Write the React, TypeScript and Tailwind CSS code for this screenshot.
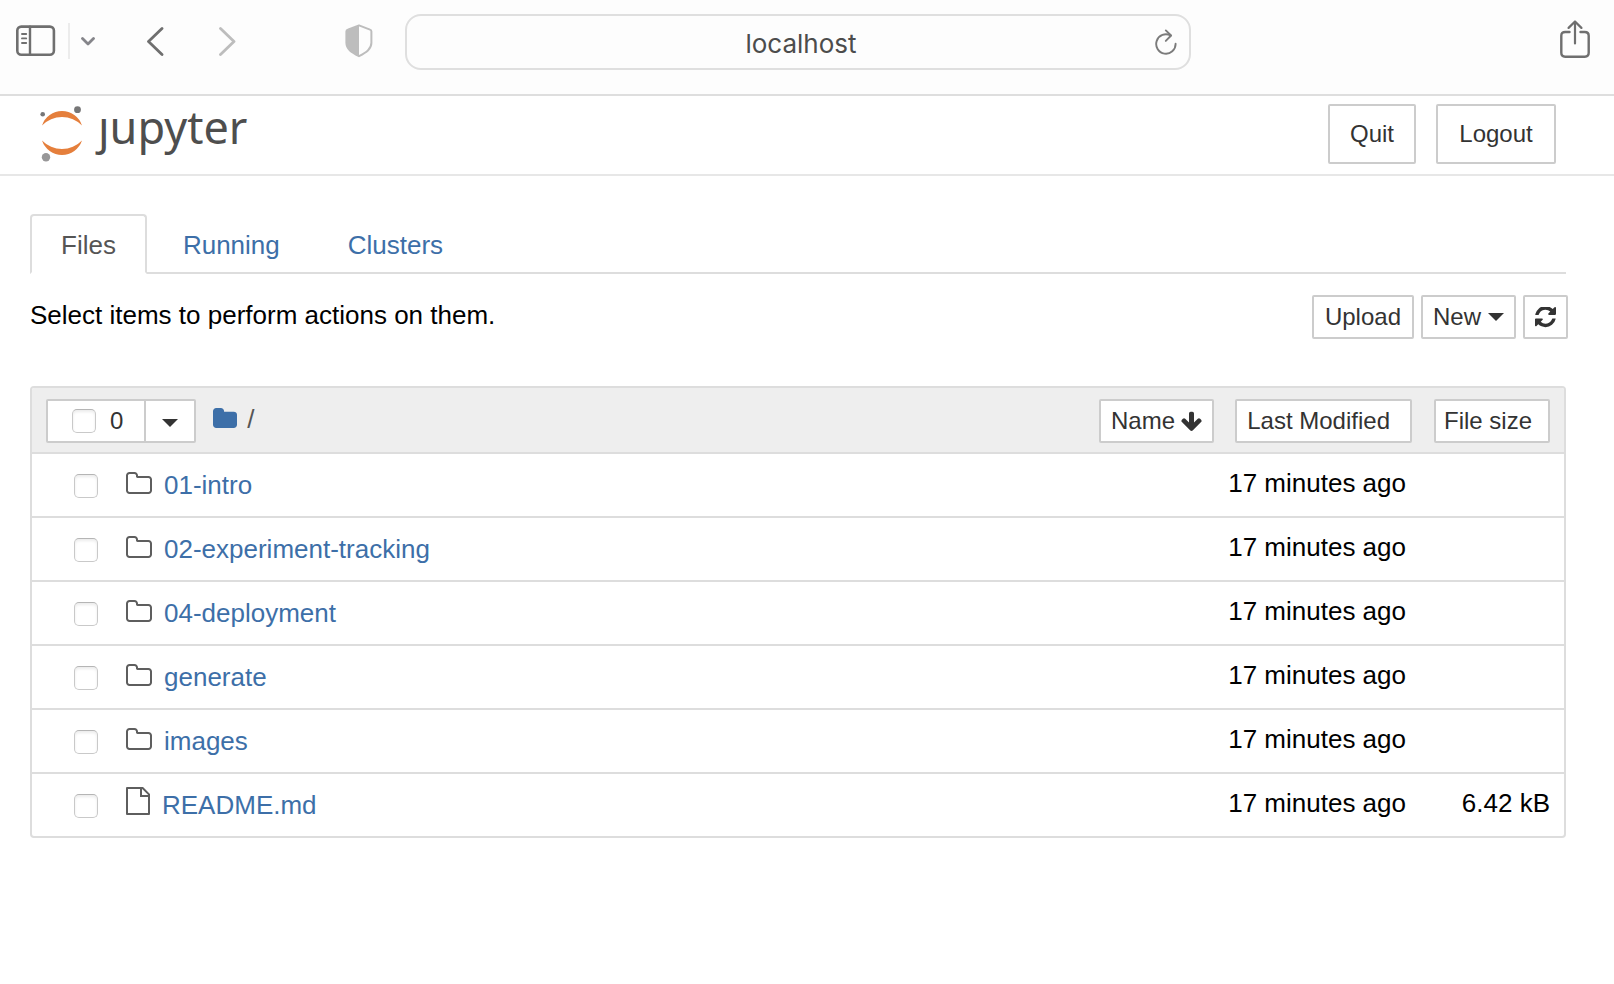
import type { ReactNode } from "react";

type Entry = { name: string; kind: "folder" | "file"; modified: string; size?: string };

const entries: Entry[] = [
  { name: "01-intro", kind: "folder", modified: "17 minutes ago" },
  { name: "02-experiment-tracking", kind: "folder", modified: "17 minutes ago" },
  { name: "04-deployment", kind: "folder", modified: "17 minutes ago" },
  { name: "generate", kind: "folder", modified: "17 minutes ago" },
  { name: "images", kind: "folder", modified: "17 minutes ago" },
  { name: "README.md", kind: "file", modified: "17 minutes ago", size: "6.42 kB" },
];

function SidebarIcon() {
  return (
    <svg width="40" height="32" viewBox="0 0 40 32" fill="none" stroke="#6f6f6f" strokeLinecap="round">
      <rect x="1.3" y="1.6" width="36.6" height="28.2" rx="4" strokeWidth="2.6" />
      <path d="M14 1.6v28.2" strokeWidth="2.4" />
      <path d="M6 9h4.2M6 13.4h4.2M6 18h4.2" strokeWidth="1.9" />
    </svg>
  );
}

function ShieldIcon() {
  return (
    <svg width="28" height="34" viewBox="0 0 28 34">
      <path d="M14 1.4 2.8 5.6c-.9.3-1.4.9-1.4 1.9v11.3c0 6.5 5.3 9.5 12.6 13.4 7.2-3.9 12.4-6.9 12.4-13.4V7.5c0-1-.5-1.6-1.4-1.9z" fill="none" stroke="#bdbdbd" strokeWidth="2" strokeLinejoin="round" />
      <path d="M14 1.4 2.8 5.6c-.9.3-1.4.9-1.4 1.9v11.3c0 6.5 5.3 9.5 12.6 13.4z" fill="#bdbdbd" />
    </svg>
  );
}

function ReloadIcon() {
  return (
    <svg width="22" height="27" viewBox="0 0 22 27" fill="none" stroke="#7b7b7b" strokeWidth="1.9" strokeLinecap="round" strokeLinejoin="round">
      <path d="M20.6 14.8A9.7 9.7 0 1 1 15.6 6.5" />
      <path d="M10.8 1.4l5.3 5.1-5.3 5.4" />
    </svg>
  );
}

function ShareIcon() {
  return (
    <svg width="30" height="38" viewBox="0 0 30 38" fill="none" stroke="#6f6f6f" strokeLinecap="round" strokeLinejoin="round">
      <path d="M9.5 12H5.2C2.6 12 1.3 13.3 1.3 15.8v17c0 2.6 1.3 3.9 3.9 3.9h19.6c2.6 0 3.9-1.3 3.9-3.9v-17c0-2.5-1.3-3.8-3.9-3.8H20.5" strokeWidth="2.4" />
      <path d="M15 23.5V1.7M8.6 7.9 15 1.5l6.4 6.4" strokeWidth="2.2" />
    </svg>
  );
}

function JupyterMark() {
  return (
    <svg width="42" height="56" viewBox="0 0 42 56">
      <path d="M2 19.5A21.1 21.1 0 0 1 42 19.500A28 28 0 0 0 2 19.500z" fill="#e57f3c" />
      <path d="M2 34.500A21.100 21.100 0 0 0 42 34.500A28 28 0 0 1 2 34.500z" fill="#e57f3c" />
      <circle cx="2.700" cy="8.200" r="2.300" fill="#767677" />
      <circle cx="37.500" cy="3.700" r="3.400" fill="#767677" />
      <circle cx="6" cy="51.200" r="4.200" fill="#989798" />
    </svg>
  );
}

function RefreshIcon() {
  return (
    <svg width="21" height="21" viewBox="0 64 1536 1536" fill="#333">
      <path d="M1511 928q0 5-1 7-64 268-268 434.5t-478 166.5q-146 0-282.5-55t-243.5-157l-129 129q-19 19-45 19t-45-19-19-45v-448q0-26 19-45t45-19h448q26 0 45 19t19 45-19 45l-137 137q71 66 161 102t187 36q134 0 250-65t186-179q11-17 53-117 8-23 30-23h192q13 0 22.5 9.5t9.5 22.5zm25-800v448q0 26-19 45t-45 19h-448q-26 0-45-19t-19-45 19-45l138-138q-148-137-349-137-134 0-250 65t-186 179q-11 17-53 117-8 23-30 23h-199q-13 0-22.5-9.5t-9.5-22.5v-7q65-268 270-434.5t480-166.5q146 0 284 55.5t245 156.5l130-129q19-19 45-19t45 19 19 45z" />
    </svg>
  );
}

function ArrowDownIcon() {
  return (
    <svg width="21" height="20" viewBox="53 64 1558 1547" fill="#333">
      <path d="M1611 832q0 53-37 90l-651 652q-39 37-91 37-53 0-90-37l-651-652q-38-36-38-90 0-53 38-91l74-75q39-37 91-37 53 0 90 37l294 294v-704q0-52 38-90t90-38h128q52 0 90 38t38 90v704l294-294q37-37 90-37 52 0 91 37l75 75q37 39 37 91z" />
    </svg>
  );
}

function FolderIcon() {
  return (
    <svg width="24" height="20" viewBox="0 128 1664 1408" preserveAspectRatio="none" fill="#3d6fa8">
      <path d="M1664 608v704q0 92-66 158t-158 66h-1216q-92 0-158-66t-66-158v-960q0-92 66-158t158-66h320q92 0 158 66t66 158v32h672q92 0 158 66t66 158z" />
    </svg>
  );
}

function FolderOutlineIcon() {
  return (
    <svg width="26" height="22" viewBox="0 128 1664 1408" fill="#5e5e5e">
      <path d="M1536 1312v-704q0-40-28-68t-68-28h-704q-40 0-68-28t-28-68v-64q0-40-28-68t-68-28h-320q-40 0-68 28t-28 68v960q0 40 28 68t68 28h1216q40 0 68-28t28-68zm128-704v704q0 92-66 158t-158 66h-1216q-92 0-158-66t-66-158v-960q0-92 66-158t158-66h320q92 0 158 66t66 158v32h672q92 0 158 66t66 158z" />
    </svg>
  );
}

function FileOutlineIcon() {
  return (
    <svg width="24" height="28" viewBox="0 0 24 28" fill="none" stroke="#5e5e5e" strokeWidth="2">
      <path d="M1 1h15.6L23 7.4V27H1z" strokeLinejoin="round" />
      <path d="M15 1v8h8" />
    </svg>
  );
}

function Caret() {
  return (
    <svg width="16" height="8" viewBox="0 0 16 8" fill="#333">
      <path d="M0 0h16L8 8z" />
    </svg>
  );
}

function Checkbox({ id, label }: { id: string; label: string }) {
  return (
    <input
      id={id}
      type="checkbox"
      aria-label={label}
      className="size-6 shrink-0 appearance-none rounded-[5px] border border-[#c9c9c9] border-t-[#b5b5b5] bg-white shadow-[inset_0_2px_3px_rgba(0,0,0,0.08)] checked:bg-[#3d6fa8]"
    />
  );
}

function Button({ children, className, label }: { children: ReactNode; className: string; label?: string }) {
  return (
    <button
      type="button"
      aria-label={label}
      className={
        "flex items-center justify-center whitespace-nowrap rounded-[2px] border-2 border-[#ccc] bg-white text-2xl leading-8 font-normal text-[#333] " +
        className
      }
    >
      {children}
    </button>
  );
}

function BrowserBar() {
  return (
    <div className="grid h-24 grid-cols-[405px_1fr_423px] items-start border-b-2 border-[#dedede] bg-[#fdfdfd] pt-3.5">
      <div className="flex h-14 items-center pb-0.5 pl-4">
        <button type="button" aria-label="Show sidebar">
          <SidebarIcon />
        </button>
        <div className="ml-3 h-9 w-0.5 bg-[#ececec]" />
        <button type="button" aria-label="Tab groups" className="ml-[11px]">
          <svg width="14" height="9" viewBox="0 0 14 9" fill="none" stroke="#85858a" strokeWidth="2.8" strokeLinecap="round" strokeLinejoin="round">
            <path d="M1.5 1.5 7 7l5.5-5.5" />
          </svg>
        </button>
        <button type="button" aria-label="Back" className="ml-[52px]">
          <svg width="17" height="29" viewBox="0 0 17 29" fill="none" stroke="#6f6f6f" strokeWidth="2.8" strokeLinecap="round" strokeLinejoin="round">
            <path d="M15 1.5 1.5 14.5 15 27.5" />
          </svg>
        </button>
        <button type="button" aria-label="Forward" className="ml-[55px]">
          <svg width="17" height="29" viewBox="0 0 17 29" fill="none" stroke="#bdbdbd" strokeWidth="2.8" strokeLinecap="round" strokeLinejoin="round">
            <path d="M1.5 1.5 15 14.5 1.5 27.5" />
          </svg>
        </button>
        <button type="button" aria-label="Privacy report" className="ml-[109px]">
          <ShieldIcon />
        </button>
      </div>
      <div className="flex h-14 items-center rounded-2xl border-2 border-[#dfdfdf] pr-3 pl-10">
        <input
          type="text"
          aria-label="Address"
          defaultValue="localhost"
          className="min-w-0 flex-1 bg-transparent pt-1 text-center font-['Inter',sans-serif] text-[26px] leading-8 text-[#4c4c4c] outline-none"
        />
        <button type="button" aria-label="Reload page">
          <ReloadIcon />
        </button>
      </div>
      <div className="flex h-14 items-center justify-end pr-6 pb-1.5">
        <button type="button" aria-label="Share">
          <ShareIcon />
        </button>
      </div>
    </div>
  );
}

function Header() {
  return (
    <header className="flex h-20 items-start justify-between border-b-2 border-[#e7e7e7] pt-2 pr-[58px] pl-10">
      <a href="#home" aria-label="jupyter" className="flex items-start gap-4 pt-0.5">
        <JupyterMark />
        <span className="font-['Noto_Sans',sans-serif] text-[45px] leading-[42px] text-[#4e4e4e]">ȷupyter</span>
      </a>
      <div className="flex gap-5">
        <Button className="h-15 px-5">Quit</Button>
        <Button className="h-15 min-w-[120px] px-5">Logout</Button>
      </div>
    </header>
  );
}

function Tabs() {
  return (
    <nav className="flex h-15 gap-1 border-b-2 border-[#ddd] text-[26px] leading-9">
      <a href="#files" aria-current="page" className="h-15 rounded-t-[4px] border-2 border-[#ddd] border-b-white bg-white px-[29px] pt-[11px] text-[#555]">
        Files
      </a>
      <a href="#running" className="px-8 pt-[13px] text-[#3d6fa8]">
        Running
      </a>
      <a href="#clusters" className="px-8 pt-[13px] text-[#3d6fa8]">
        Clusters
      </a>
    </nav>
  );
}

function FileTable() {
  return (
    <div className="mt-[47px] overflow-hidden rounded-[4px] border-2 border-[#ddd]">
      <table className="w-full table-fixed border-separate border-spacing-0">
        <colgroup>
          <col />
          <col className="w-[198px]" />
          <col className="w-[142px]" />
        </colgroup>
        <thead className="bg-[#eee]">
          <tr className="h-16">
            <th className="p-0 pt-0.5 pr-2.5 pl-3.5 font-normal">
              <div className="flex items-center">
                <div className="flex h-11 rounded-[2px] border-2 border-[#ccc] bg-white">
                  <label htmlFor="select-all" className="flex items-center gap-3.5 pr-[21px] pl-6 text-2xl leading-8 text-[#333]">
                    <Checkbox id="select-all" label="Select all" />
                    0
                  </label>
                  <button type="button" aria-label="Select by type" className="flex w-[50px] items-center justify-center border-l-2 border-[#ccc] pt-1">
                    <Caret />
                  </button>
                </div>
                <a href="#root" aria-label="Root folder" className="ml-[17px] pb-1.5">
                  <FolderIcon />
                </a>
                <span className="ml-2.5 pb-1 text-[26px] leading-8 text-[#555]">/</span>
                <Button className="ml-auto h-11 gap-1.5 px-2.5">
                  Name <ArrowDownIcon />
                </Button>
              </div>
            </th>
            <th className="p-0 pt-0.5 pr-2.5">
              <Button className="ml-auto h-11 pr-5 pl-2.5">Last Modified</Button>
            </th>
            <th className="p-0 pt-0.5 pr-3.5">
              <Button className="ml-auto h-11 pr-4 pl-2">File size</Button>
            </th>
          </tr>
        </thead>
        <tbody className="text-[26px] leading-9 text-black">
          {entries.map((entry) => (
            <tr key={entry.name} className="h-16">
              <td className="border-t-2 border-[#ddd] p-0 pl-[42px]">
                <div className="flex items-center">
                  <div className="flex pt-0.5">
                    <Checkbox id={"select-" + entry.name} label={"Select " + entry.name} />
                  </div>
                  <div className={entry.kind === "folder" ? "ml-7 pb-1" : "ml-7 pb-2"}>
                    {entry.kind === "folder" ? <FolderOutlineIcon /> : <FileOutlineIcon />}
                  </div>
                  <a href={"#" + entry.name} className="ml-3 text-[#3d6fa8]">
                    {entry.name}
                  </a>
                </div>
              </td>
              <td className="border-t-2 border-[#ddd] p-0 pr-4 pb-1 text-right">{entry.modified}</td>
              <td className="border-t-2 border-[#ddd] p-0 pr-3.5 pb-1 text-right">{entry.size}</td>
            </tr>
          ))}
        </tbody>
      </table>
    </div>
  );
}

export default function App() {
  return (
    <div className="min-h-screen bg-white font-['Liberation_Sans',Arial,sans-serif]">
      <BrowserBar />
      <Header />
      <main className="pt-[38px] pr-12 pb-12 pl-[30px]">
        <Tabs />
        <div className="mt-[21px] -mr-0.5 flex items-start justify-between">
          <p className="pt-0.5 text-[26px] leading-9 text-black">Select items to perform actions on them.</p>
          <div className="flex gap-[7px]">
            <Button className="h-11 px-[11px]">Upload</Button>
            <Button className="h-11 gap-[7px] px-2.5">
              New <Caret />
            </Button>
            <Button className="h-11 px-2.5" label="Refresh file list">
              <RefreshIcon />
            </Button>
          </div>
        </div>
        <FileTable />
      </main>
    </div>
  );
}
